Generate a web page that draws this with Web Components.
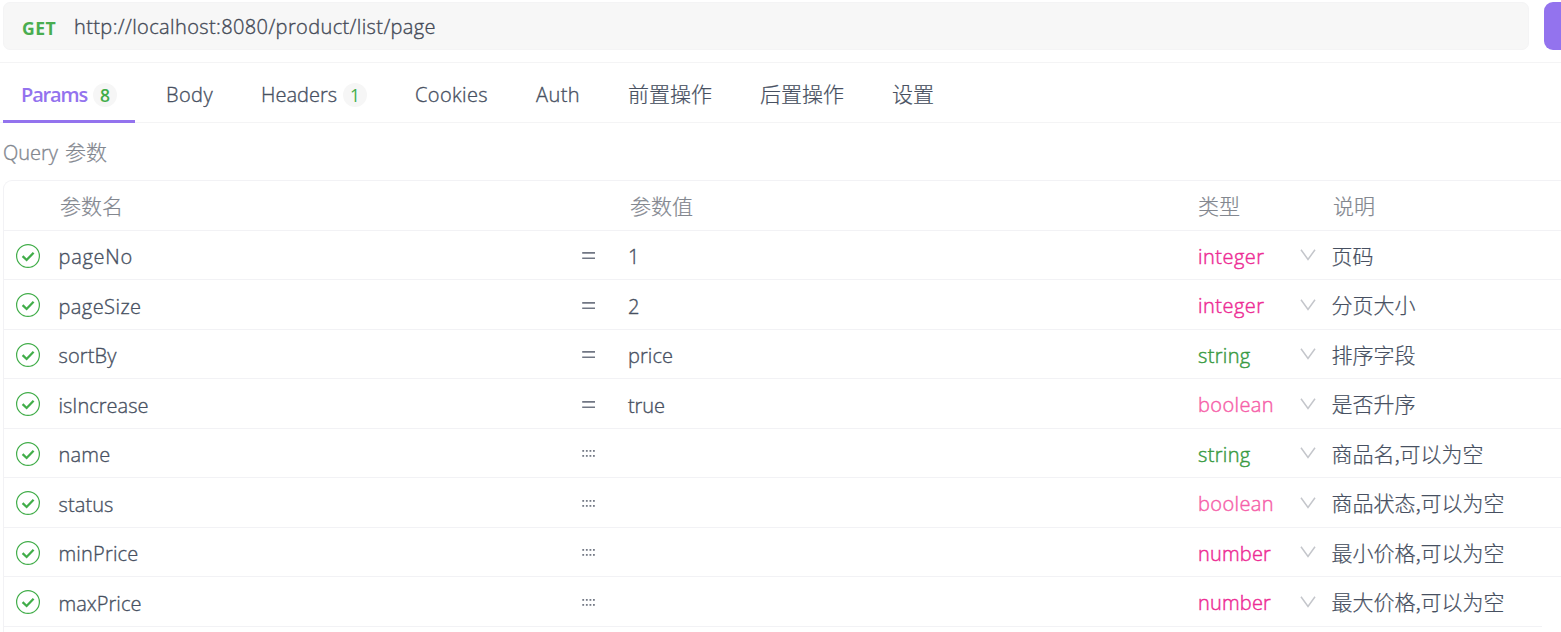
<!DOCTYPE html>
<html lang="zh-CN">
<head>
<meta charset="utf-8">
<title>Request editor</title>
<style>
html,body{margin:0;height:100%;overflow:hidden;background:#fff}
body{font-family:"Open Sans","Noto Sans CJK SC",sans-serif;font-size:20px;font-weight:300;-webkit-text-stroke:.35px;color:#475061;line-height:30px}
</style>
</head>
<body>
<api-request></api-request>
<script>
const define=(name,html,setup)=>customElements.define(name,class extends HTMLElement{
  connectedCallback(){
    if(this.shadowRoot)return;
    const t=document.createElement('template');t.innerHTML=html;
    this.attachShadow({mode:'open'}).append(t.content.cloneNode(true));
    if(setup)setup(this,this.shadowRoot);
  }
});

/* Text tracked so that its advance equals the "w" attribute. */
define('fit-text',`<style>:host{display:inline-block;white-space:pre}span{display:inline-block}
:host([cjk]) span{font-family:"Noto Sans CJK SC",sans-serif;font-size:21px;font-weight:300;-webkit-text-stroke:.22px;line-height:var(--cjk-line,28px);vertical-align:top}</style><span><slot></slot></span>`,(el,r)=>{
  const s=r.querySelector('span'),w=+el.getAttribute('w'),n=[...el.textContent].length;
  if(w){const nat=s.getBoundingClientRect().width;s.style.letterSpacing=((w-nat)/n)+'px';el.style.width=w+'px';}
});

define('check-icon',`<style>:host{display:block;width:24px;height:24px}svg{display:block}</style>
<svg width="24" height="24" viewBox="0 0 24 24" fill="none" stroke="#41ad49"><circle cx="12" cy="12" r="11.4" stroke-width="1.2"/><path d="M6.6 12.2l4 3.8 7-7.2" stroke-width="2.3"/></svg>`);

define('chevron-icon',`<style>:host{display:block;width:16px;height:12px}svg{display:block}</style>
<svg width="16" height="12" viewBox="0 0 16 12" fill="none" stroke="#c4c6cb" stroke-width="1.5"><path d="M1 .8l7 9.6L15 .8"/></svg>`);

define('match-icon',`<style>:host{display:block;width:14px;height:9px}svg{display:block}</style>
<svg width="14" height="9" viewBox="0 0 14 9"></svg>`,(el,r)=>{
  r.querySelector('svg').innerHTML=el.hasAttribute('dots')
    ?[1,6].map(y=>[.3,3.9,7.5,11].map(x=>`<rect x="${x}" y="${y}" width="1.8" height="1.8" fill="#757b87"/>`).join('')).join('')
    :'<path d="M.2 1.9h12.8M.2 7.2h12.8" stroke="#717784" stroke-width="1.6"/>';
});

define('url-bar',`<style>
:host{display:flex;height:62px;padding:2px 0 0 3px;box-sizing:border-box;border-bottom:0;gap:15px;overflow:hidden}
.box{flex:none;width:1526px;height:48px;box-sizing:border-box;border:1px solid #f4f4f5;border-radius:7px;background:#f7f7f7;display:flex;padding:9px 0 0 19px}
.m{color:#49ad50;font-weight:700;font-size:17.6px;margin:1px 17px 0 -1px;-webkit-text-stroke:0}
.u{color:#434956;margin-left:1px}
.send{flex:none;width:100px;height:48px;border-radius:9px;background:#9373ee}
</style><div class="box"><fit-text class="m" w="34">GET</fit-text><fit-text class="u" w="362">http://localhost:8080/product/list/page</fit-text></div><div class="send"></div>`);

define('tab-item',`<style>
:host{display:flex;align-items:flex-start;height:60px;box-sizing:border-box;padding:17px 18px 0 18px;border-bottom:3px solid transparent;margin-right:12px}
:host([active]){border-color:#9373ee;color:#9373ee;font-weight:600;-webkit-text-stroke:0;margin-right:13px}
.b{display:none;width:24px;height:24px;border-radius:12px;background:#f6f6f6;color:#41ad49;font-size:17.5px;line-height:25px;text-align:center;margin:3px 0 0 6px;font-weight:400;-webkit-text-stroke:0}
:host([count]) .b{display:block}
:host([active]) .b{font-weight:600}
</style><slot></slot><span class="b"></span>`,(el,r)=>{r.querySelector('.b').textContent=el.getAttribute('count')||''});

define('tab-bar',`<style>
:host{display:flex;height:61px;box-sizing:border-box;border-top:1px solid #f4f4f5;padding-left:3px;box-shadow:inset 0 -1px #f4f4f5}
</style><slot></slot>`);

define('param-table',`<style>
:host{display:block;margin-left:3px;border:1px solid #f2f2f5;border-right:0;border-bottom:0;border-radius:9px 0 0 0;height:452px;box-sizing:border-box}
</style><slot></slot>`);

define('param-row',`<style>
:host{display:grid;grid-template-columns:54px 524px 46px 570px 102px 31px 1fr;height:var(--h,50px);box-sizing:border-box;border-bottom:1px solid #f2f2f5;padding-top:11px}
:host([head]){color:#83878f;padding-top:10px}
:host(:not([head])) :is(.n,.m,.v,.c){margin-top:var(--shift,0)}
:host([head]) .n,:host([head]) .v{padding-left:2px}
:host([head]) .d{margin:0;padding-left:2px}
check-icon{margin:2px 0 0 12px}
match-icon{margin:9px 0 0 0}
chevron-icon{margin:7px 0 0 0}
.n{padding-left:.5px}
.t{-webkit-text-stroke:.45px}
.d{margin-top:-1px;padding-left:.5px}
</style><span class="i"></span><span class="n"></span><span class="m"></span><span class="v"></span><span class="t"></span><span class="c"></span><span class="d"></span>`,(el,r)=>{
  const g=a=>el.getAttribute(a),q=c=>r.querySelector('.'+c);
  const put=(c,s,cjk)=>{if(!s)return;const [t,w]=s.split('|');q(c).innerHTML=`<fit-text ${cjk?'cjk':''} w="${w||''}">${t}</fit-text>`};
  const head=el.hasAttribute('head');
  put('n',g('name'),head);put('v',g('value'),head);put('t',g('type'),head);put('d',g('desc'),true);
  if(!head){
    q('i').innerHTML='<check-icon></check-icon>';
    q('m').innerHTML=g('value')?'<match-icon></match-icon>':'<match-icon dots></match-icon>';
    q('c').innerHTML='<chevron-icon></chevron-icon>';
    q('t').style.color={integer:'#ed2b94',number:'#ed2b94',boolean:'#f65fa9',string:'#389a41'}[g('type').split('|')[0]];
  }
});

define('api-request',`<style>
:host{display:block}
tab-bar,.q{--cjk-line:26px}
.q{height:57px;padding:15px 0 0 3px;box-sizing:border-box;color:#83878f;display:flex;gap:2px}
param-row:nth-of-type(odd){--h:50px;--shift:1px}
param-row:nth-of-type(even){--h:49px}
param-row:last-child{margin-right:19px}
</style>
<url-bar></url-bar>
<tab-bar>
<tab-item active count="8"><fit-text w="66">Params</fit-text></tab-item>
<tab-item><fit-text w="47">Body</fit-text></tab-item>
<tab-item count="1"><fit-text w="76">Headers</fit-text></tab-item>
<tab-item><fit-text w="73">Cookies</fit-text></tab-item>
<tab-item><fit-text w="44">Auth</fit-text></tab-item>
<tab-item><fit-text cjk w="84">前置操作</fit-text></tab-item>
<tab-item><fit-text cjk w="84">后置操作</fit-text></tab-item>
<tab-item><fit-text cjk w="42">设置</fit-text></tab-item>
</tab-bar>
<div class="q"><fit-text w="60">Query </fit-text><fit-text cjk w="42">参数</fit-text></div>
<param-table>
<param-row head name="参数名|63" value="参数值|63" type="类型|42" desc="说明|42"></param-row>
<param-row name="pageNo|74.5" value="1|12" type="integer|66.5" desc="页码|42"></param-row>
<param-row name="pageSize|83" value="2|12" type="integer|66.5" desc="分页大小|84"></param-row>
<param-row name="sortBy|58" value="price|45" type="string|52.5" desc="排序字段|84"></param-row>
<param-row name="isIncrease|90" value="true|37" type="boolean|76" desc="是否升序|84"></param-row>
<param-row name="name|52" type="string|52.5" desc="商品名,可以为空|152"></param-row>
<param-row name="status|55" type="boolean|76" desc="商品状态,可以为空|173"></param-row>
<param-row name="minPrice|80" type="number|73" desc="最小价格,可以为空|173"></param-row>
<param-row name="maxPrice|83" type="number|73" desc="最大价格,可以为空|173"></param-row>
</param-table>`);
</script>
</body>
</html>
